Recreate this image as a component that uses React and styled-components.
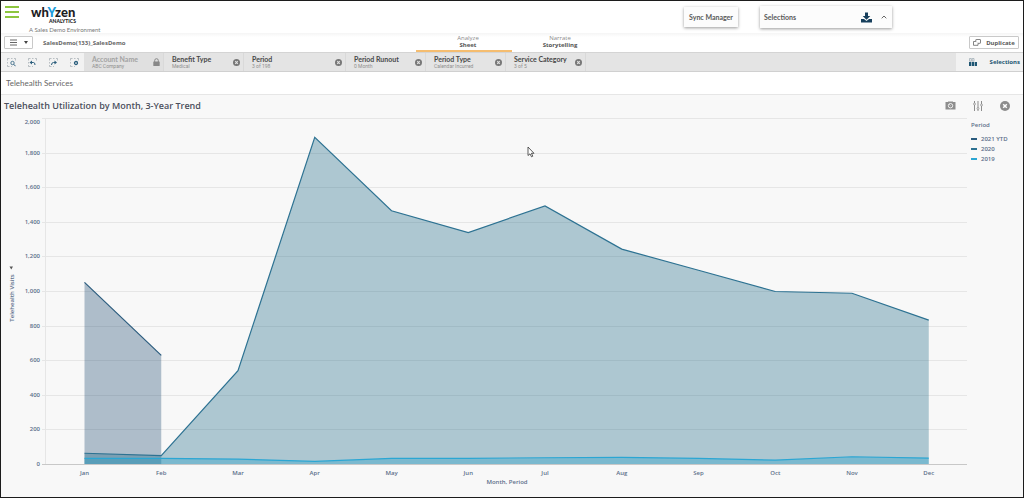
import React from 'react';
import styled, { createGlobalStyle } from 'styled-components';

const GlobalStyle = createGlobalStyle`
	* {
		box-sizing: border-box;
	}
	body {
		margin: 0;
		background: #f8f8f8;
		color: #595959;
		font-family: 'Open Sans', 'Liberation Sans', sans-serif;
	}
	button {
		font: inherit;
		color: inherit;
		padding: 0;
		border: 0;
		background: none;
		cursor: pointer;
	}
	svg {
		display: block;
		flex: none;
	}
`;

const Page = styled.div`
	display: flex;
	flex-direction: column;
	min-height: 100vh;
	border: 1px solid #1c1c1c;
`;

const Header = styled.header`
	display: flex;
	align-items: flex-start;
	height: 32px;
	padding: 5px 131px 0 4px;
	background: #fff;
`;

const MenuButton = styled.button`
	display: grid;
	gap: 3px;
	width: 14px;
	margin-right: 10px;
`;

const MenuBar = styled.span`
	height: 2px;
	background: #8dc63f;
`;

const Brand = styled.div`
	display: flex;
	flex-direction: column;
	width: 68px;
`;

const LogoName = styled.span`
	padding-left: 2px;
	color: #1d1d1f;
	font: 900 13px/13px Lato, sans-serif;
`;

const LogoAccent = styled.span`
	color: #1b9ddb;
`;

const LogoTag = styled.span`
	padding-left: 20px;
	color: #1d1d1f;
	font: 900 5px/5px Lato, sans-serif;
`;

const Tagline = styled.span`
	margin-top: 2px;
	color: #777;
	font: 6px/8px Lato, sans-serif;
	white-space: nowrap;
`;

const HeaderActions = styled.div`
	display: flex;
	align-items: center;
	gap: 22px;
	margin-left: auto;
	font: 700 7px/20px Lato, sans-serif;
`;

const SyncButton = styled.button`
	width: 54px;
	height: 20px;
	background: #fcfcfc;
	box-shadow: 0 1px 3px rgba(0, 0, 0, 0.4);
`;

const SelectionsCard = styled.div`
	display: flex;
	align-items: center;
	width: 132px;
	height: 22px;
	padding: 0 5px 0 4px;
	background: #fcfcfc;
	box-shadow: 0 1px 3px rgba(0, 0, 0, 0.4);
`;

const CardLabel = styled.span`
	flex: 1;
`;

const CardButton = styled.button`
	margin-left: 9px;
`;

const Toolbar = styled.div`
	display: grid;
	grid-template-columns: 1fr auto 1fr;
	height: 19px;
	background: linear-gradient(#f5f5f5, #fff 4px);
`;

const ToolbarSide = styled.div`
	display: flex;
	align-items: center;
	justify-content: ${props => (props.$end ? 'flex-end' : 'flex-start')};
	gap: 10px;
	padding: 0 4px 0 3px;
	font: 700 6px/12px 'Noto Sans', sans-serif;
`;

const OutlineButton = styled.button`
	display: flex;
	align-items: center;
	justify-content: center;
	gap: ${props => props.$gap}px;
	width: ${props => props.$width}px;
	height: 13px;
	border: 1px solid #c9c9c9;
	border-radius: 1px;
	background: #fff;
`;

const AppName = styled.span`
	color: #666;
`;

const Tabs = styled.nav`
	display: flex;
	padding-right: 8px;
`;

const Tab = styled.a`
	display: flex;
	flex-direction: column;
	align-items: center;
	width: ${props => (props.$active ? 96 : 88)}px;
	padding: 2px 0 0 8px;
	border-bottom: 2px solid ${props => (props.$active ? '#f5bd70' : 'transparent')};
	color: #8a8a8a;
	font-size: 6px;
	line-height: 7px;
	text-decoration: none;
`;

const TabTitle = styled.b`
	color: #555;
`;

const FilterBar = styled.div`
	display: flex;
	height: 20px;
	border-top: 1px solid #d4d4d4;
	border-bottom: 1px solid #d0d0d0;
	background: #e4e4e4;
`;

const FilterTools = styled.div`
	display: flex;
	align-items: center;
	gap: 12px;
	width: 83px;
	padding-left: 6px;
	background: #f2f2f2;
`;

const FilterItem = styled.div`
	display: flex;
	align-items: center;
	width: ${props => (props.$wide ? 102 : 80)}px;
	padding: 0 3px 0 8px;
	border-right: 1px solid #d9d9d9;
	color: ${props => (props.$locked ? '#a3a3a3' : '#484848')};
	background: ${props => (props.$locked ? '#e0e0e0' : 'transparent')};
`;

const FilterText = styled.div`
	flex: 1;
	font: 7px/7px Lato, sans-serif;
	white-space: nowrap;
`;

const FilterName = styled.div`
	font-weight: 700;
`;

const FilterValue = styled.div`
	color: #8f8f8f;
	font: 5px/6px Roboto, sans-serif;
`;

const SelectionsToggle = styled.button`
	display: flex;
	align-items: center;
	justify-content: space-between;
	width: 67px;
	margin-left: auto;
	padding: 0 3px 0 13px;
	background: #f2f2f2;
	color: #1f5673;
	font: 700 6px/12px 'Noto Sans', sans-serif;
`;

const SheetTitle = styled.h1`
	margin: 0;
	padding-left: 5px;
	border-bottom: 1px solid #e6e6e6;
	background: #fff;
	color: #666;
	font: 8px/22px Lato, sans-serif;
`;

const Panel = styled.main`
	flex: 1;
	color: #5c6f8a;
`;

const PanelHeader = styled.div`
	display: flex;
	align-items: center;
	justify-content: space-between;
	height: 21px;
	padding: 0 13px 0 3px;
`;

const PanelTitle = styled.h2`
	margin: 0;
	color: #4b4f5c;
	font: 600 9px/21px 'Open Sans', sans-serif;
`;

const PanelTools = styled.div`
	display: flex;
	align-items: center;
	gap: 17px;
	color: #8d8d8d;
`;

const PanelBody = styled.div`
	display: grid;
	grid-template-columns: 1fr 56px;
`;

const Legend = styled.div`
	padding: 4px 0 0 4px;
	font-size: 6px;
	font-weight: 600;
	line-height: 10px;
	white-space: nowrap;
`;

const LegendList = styled.ul`
	margin: 4px 0 0;
	padding: 0;
	list-style: none;
`;

const LegendItem = styled.li`
	display: flex;
	align-items: center;
	gap: 4px;

	&::before {
		content: '';
		width: 6px;
		height: 2px;
		background: ${props => props.$color};
	}
`;

const ChartSvg = styled.svg`
	width: 100%;
	height: auto;
`;

const AxisLabel = styled.text`
	fill: #5c6f8a;
	font: 600 6px 'Open Sans', sans-serif;
	text-anchor: ${props => props.$anchor || 'middle'};
`;

const filters = [
	{ name: 'Account Name', value: 'ABC Company', locked: true },
	{ name: 'Benefit Type', value: 'Medical' },
	{ name: 'Period', value: '3 of 198', wide: true },
	{ name: 'Period Runout', value: '0 Month' },
	{ name: 'Period Type', value: 'Calendar Incurred' },
	{ name: 'Service Category', value: '3 of 5' },
];

const months = ['Jan', 'Feb', 'Mar', 'Apr', 'May', 'Jun', 'Jul', 'Aug', 'Sep', 'Oct', 'Nov', 'Dec'];
const ticks = [0, 200, 400, 600, 800, 1000, 1200, 1400, 1600, 1800, 2000];

const series = [
	{ name: '2021 YTD', color: '#2b5c7e', fill: '#12406b', values: [1050, 628] },
	{
		name: '2020',
		color: '#2d7292',
		fill: '#10607f',
		values: [62, 48, 540, 1888, 1464, 1338, 1492, 1242, 1120, 997, 987, 832],
	},
	{
		name: '2019',
		color: '#2ba6d3',
		fill: '#129cca',
		values: [32, 32, 28, 15, 32, 33, 36, 38, 32, 22, 42, 34],
	},
];

const BASE = 348;
const xOf = i => 83.5 + i * 76.75;
const yOf = value => BASE - value * 0.173;
const pointsOf = values => values.map((v, i) => `${xOf(i)},${yOf(v)}`).join(' ');

const Chart = () => (
	<ChartSvg viewBox="0 0 966 380" role="img" aria-label="Telehealth visits by month">
		<path d="M44.5 2V348" stroke="#e6e6e6" />
		{ticks.map(t => (
			<g key={t}>
				<path
					d={`M41 ${Math.round(yOf(t)) + 0.5}H966`}
					stroke={t === 0 ? '#c8c8c8' : '#e6e6e6'}
				/>
				<AxisLabel x="39" y={t === 2000 ? 8 : Math.round(yOf(t)) + 2} $anchor="end">
					{t.toLocaleString('en-US')}
				</AxisLabel>
			</g>
		))}
		{series.map(s => (
			<g key={s.name}>
				<polygon
					points={`${xOf(0)},${BASE} ${pointsOf(s.values)} ${xOf(s.values.length - 1)},${BASE}`}
					fill={s.fill}
					fillOpacity="0.32"
				/>
				<polyline points={pointsOf(s.values)} fill="none" stroke={s.color} strokeWidth="1.2" />
			</g>
		))}
		{months.map((m, i) => (
			<AxisLabel key={m} x={xOf(i)} y="359">
				{m}
			</AxisLabel>
		))}
		<AxisLabel x="506" y="368">
			Month, Period
		</AxisLabel>
		<AxisLabel transform="translate(13 182) rotate(-90)">Telehealth Visits</AxisLabel>
		<path d="M8.5 150.5h3.5l-1.7 3z" fill="#555" />
		<path
			d="M527 31v8.5l2-1.7 1.5 3 1.3-.6-1.4-2.9h2.6z"
			fill="#fff"
			stroke="#333"
			strokeWidth=".8"
		/>
	</ChartSvg>
);

const SelectionIcon = ({ children }) => (
	<svg width="9" height="9" viewBox="0 0 9 9" fill="none" stroke="#2c5f7d">
		<path d="M.5 2.5v-2h2M4 .5h1.5M7 .5h1.5v2M.5 4v1.5M.5 7v1.5h2M4 8.5h1" stroke="#a0a9af" strokeWidth=".7" />
		{children}
	</svg>
);

const ClearIcon = ({ size, color, hole }) => (
	<svg width={size} height={size} viewBox="0 0 10 10">
		<circle cx="5" cy="5" r="5" fill={color} />
		<path d="M3.2 3.2l3.6 3.6M6.8 3.2L3.2 6.8" stroke={hole} strokeWidth="1.5" />
	</svg>
);

const LockIcon = () => (
	<svg width="7" height="8" viewBox="0 0 7 8">
		<path d="M1.7 4V2.5a1.8 1.8 0 0 1 3.6 0V4" fill="none" stroke="#888" />
		<rect x=".3" y="3.5" width="6.4" height="4.5" rx=".5" fill="#888" />
	</svg>
);

const App = () => (
	<>
		<GlobalStyle />
		<Page>
			<Header>
				<MenuButton aria-label="Menu">
					<MenuBar />
					<MenuBar />
					<MenuBar />
				</MenuButton>
				<Brand>
					<LogoName>
						wh<LogoAccent>Y</LogoAccent>zen
					</LogoName>
					<LogoTag>ANALYTICS</LogoTag>
					<Tagline>A Sales Demo Environment</Tagline>
				</Brand>
				<HeaderActions>
					<SyncButton>Sync Manager</SyncButton>
					<SelectionsCard>
						<CardLabel>Selections</CardLabel>
						<CardButton aria-label="Download">
							<svg width="11" height="11" viewBox="0 0 11 11" fill="#173f5c">
								<path d="M4 .5h3V4h2.3L5.5 7.8 1.7 4H4z" />
								<path d="M0 7h3l2.5 2L8 7h3v3.5H0z" />
							</svg>
						</CardButton>
						<CardButton aria-label="Collapse">
							<svg width="6" height="4" viewBox="0 0 6 4" fill="none" stroke="#666">
								<path d="M.7 3.3L3 1l2.3 2.3" />
							</svg>
						</CardButton>
					</SelectionsCard>
				</HeaderActions>
			</Header>

			<Toolbar>
				<ToolbarSide>
					<OutlineButton $width={29} $gap={7} aria-label="Navigation">
						<svg width="7" height="7" viewBox="0 0 7 7" stroke="#666">
							<path d="M0 1h7M0 3.5h7M0 6h7" />
						</svg>
						<svg width="4" height="3" viewBox="0 0 4 3" fill="#444">
							<path d="M0 0h4L2 3z" />
						</svg>
					</OutlineButton>
					<AppName>SalesDemo(133)_SalesDemo</AppName>
				</ToolbarSide>
				<Tabs>
					<Tab href="#sheet" $active>
						Analyze
						<TabTitle>Sheet</TabTitle>
					</Tab>
					<Tab href="#story">
						Narrate
						<TabTitle>Storytelling</TabTitle>
					</Tab>
				</Tabs>
				<ToolbarSide $end>
					<OutlineButton $width={50} $gap={5}>
						<svg width="8" height="7" viewBox="0 0 8 7" fill="#fff" stroke="#666" strokeWidth=".8">
							<rect x="2.8" y=".5" width="4.7" height="3.8" rx=".4" />
							<path d="M2.8 2.5H.5v3.8H5v-2" />
						</svg>
						Duplicate
					</OutlineButton>
				</ToolbarSide>
			</Toolbar>

			<FilterBar>
				<FilterTools>
					<button aria-label="Search selections">
						<SelectionIcon>
							<circle cx="5.5" cy="5" r="1.7" strokeWidth=".8" />
							<path d="M6.8 6.3l1.7 1.9" />
						</SelectionIcon>
					</button>
					<button aria-label="Step back">
						<SelectionIcon>
							<path d="M3 4.5h2.5q1.5 0 1.5 2.5" />
							<path d="M1.5 4.5L4 2.5v4z" fill="#2c5f7d" stroke="none" />
						</SelectionIcon>
					</button>
					<button aria-label="Step forward">
						<SelectionIcon>
							<path d="M6 4.5H4.5Q2.5 4.5 2.5 7" />
							<path d="M8 4.5L5.5 2.5v4z" fill="#2c5f7d" stroke="none" />
						</SelectionIcon>
					</button>
					<button aria-label="Clear selections">
						<SelectionIcon>
							<circle cx="6" cy="5" r="1.5" strokeWidth="1.3" />
						</SelectionIcon>
					</button>
				</FilterTools>
				{filters.map(f => (
					<FilterItem key={f.name} $wide={f.wide} $locked={f.locked}>
						<FilterText>
							<FilterName>{f.name}</FilterName>
							<FilterValue>{f.value}</FilterValue>
						</FilterText>
						{f.locked ? (
							<LockIcon />
						) : (
							<button aria-label={`Clear ${f.name}`}>
								<ClearIcon size={7} color="#777" hole="#e4e4e4" />
							</button>
						)}
					</FilterItem>
				))}
				<SelectionsToggle>
					<svg width="8" height="8" viewBox="0 0 8 8">
						<path d="M.5.5h1.8v2.7H.5zM3.2.5H5v2.7H3.2z" fill="none" stroke="#9aa8b0" strokeWidth=".7" />
						<path d="M0 4h2.3v4H0zM2.9 4h2.2v4H2.9zM5.7 4H8v4H5.7z" fill="#1f5673" />
					</svg>
					Selections
				</SelectionsToggle>
			</FilterBar>

			<SheetTitle>Telehealth Services</SheetTitle>

			<Panel>
				<PanelHeader>
					<PanelTitle>Telehealth Utilization by Month, 3-Year Trend</PanelTitle>
					<PanelTools>
						<button aria-label="Snapshot">
							<svg width="11" height="9" viewBox="0 0 11 9">
								<path d="M.5 1H3V.5h5V1h2.5v7.5H.5z" fill="#8d8d8d" />
								<circle cx="5.5" cy="4.7" r="2.2" fill="none" stroke="#f8f8f8" strokeWidth=".9" />
								<path d="M5.5 4.7L4.3 3.5" stroke="#f8f8f8" strokeWidth=".9" />
							</svg>
						</button>
						<button aria-label="Exploration menu">
							<svg width="10" height="10" viewBox="0 0 10 10" fill="#f8f8f8" stroke="#8d8d8d">
								<path d="M1.5 0v10M5 0v10M8.5 0v10" />
								<circle cx="1.5" cy="3" r="1" strokeWidth=".7" />
								<circle cx="5" cy="7.5" r="1" strokeWidth=".7" />
								<circle cx="8.5" cy="4" r="1" strokeWidth=".7" />
							</svg>
						</button>
						<button aria-label="Close">
							<ClearIcon size={10} color="#8d8d8d" hole="#fff" />
						</button>
					</PanelTools>
				</PanelHeader>
				<PanelBody>
					<Chart />
					<Legend>
						Period
						<LegendList>
							{series.map(s => (
								<LegendItem key={s.name} $color={s.color}>
									{s.name}
								</LegendItem>
							))}
						</LegendList>
					</Legend>
				</PanelBody>
			</Panel>
		</Page>
	</>
);

export default App;
